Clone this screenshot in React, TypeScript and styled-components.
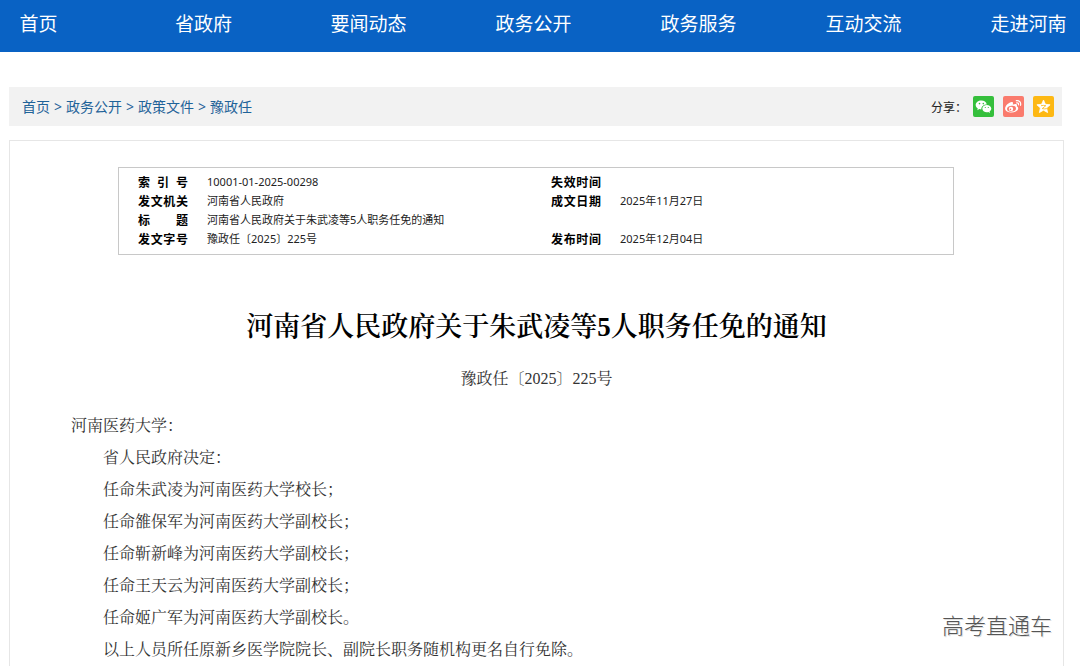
import React from 'react';
import styled, { createGlobalStyle } from 'styled-components';

const sans = '"Noto Sans", "Noto Sans CJK SC", sans-serif';
const cjkSans = '"Noto Sans CJK SC", sans-serif';
const song = '"Liberation Serif", "SimSun", "Noto Serif CJK SC", "Noto Sans CJK SC", serif';

const GlobalStyle = createGlobalStyle`
  * { box-sizing: border-box; }
  body { margin: 0; background: #fff; color: #333; font-family: ${sans}; }
`;

const Page = styled.div`
  position: relative;
  overflow: hidden;
`;

const NavBar = styled.nav`
  background: #0962c4;
  overflow: hidden;
`;

const NavList = styled.ul`
  list-style: none;
  display: grid;
  grid-template-columns: repeat(7, 1fr);
  margin: 0 -31px 0 -44px;
  padding: 0 0 6px;
`;

const NavLink = styled.a`
  display: block;
  text-align: center;
  font: 400 19px/46px ${cjkSans};
  color: #fff;
  text-decoration: none;
`;

const Container = styled.main`
  margin: 35px 16px 0 9px;
`;

const CrumbBar = styled.div`
  display: flex;
  align-items: center;
  justify-content: space-between;
  height: 39px;
  margin-right: 2px;
  padding: 0 8px 0 13px;
  background: #f2f2f2;
`;

const Crumbs = styled.div`
  display: flex;
  gap: 4px;
  font-size: 14px;
  line-height: 20px;
  color: #1f6399;
`;

const CrumbLink = styled.a`
  color: inherit;
  text-decoration: none;
`;

const Share = styled.div`
  display: flex;
  align-items: center;
  gap: 6px;
  font: 12px/20px ${cjkSans};
  color: #222;
`;

const ShareButtons = styled.div`
  display: flex;
  gap: 9px;
`;

const ShareButton = styled.button<{ $color: string }>`
  width: 21px;
  height: 21px;
  padding: 0;
  border: 0;
  border-radius: 2px;
  background: ${(p) => p.$color};
  svg { display: block; width: 21px; height: 21px; }
`;

const Panel = styled.article`
  margin-top: 14px;
  padding: 26px 61px 0;
  border: 1px solid #e6e6e6;
  border-bottom: 0;
`;

const InfoBox = styled.div`
  margin: 0 48px 0 47px;
  padding: 4px 0 6px 19px;
  border: 1px solid #c8c8c8;
`;

const InfoTable = styled.table`
  width: 100%;
  table-layout: fixed;
  border-collapse: collapse;
`;

const InfoLabel = styled.th`
  width: 50px;
  padding: 0;
  font: 700 12px/19px ${cjkSans};
  text-align: justify;
  text-align-last: justify;
  color: #000;
`;

const InfoValue = styled.td<{ $wide?: boolean }>`
  width: ${(p) => (p.$wide ? '363px' : 'auto')};
  padding: 0 0 0 19px;
  font: 11px/19px ${sans};
  color: #222;
`;

const Title = styled.h1`
  margin: 52px 0 0;
  font: 600 27px/40px ${song};
  text-align: center;
  color: #000;
`;

const DocNumber = styled.p`
  margin: 20px 0 0;
  font: 16px/24px ${song};
  text-align: center;
  color: #333;
`;

const Body = styled.div`
  margin-top: 19px;
  font: 16px/32px ${song};
  color: #333;
`;

const Paragraph = styled.p<{ $flush?: boolean }>`
  margin: 0;
  text-indent: ${(p) => (p.$flush ? '0' : '2em')};
`;

const Watermark = styled.div`
  position: absolute;
  right: 28px;
  bottom: 26px;
  font: 300 22px/32px ${cjkSans};
  color: #555;
  text-shadow: 1px 1px 0 #ddd;
`;

const navItems = ['首页', '省政府', '要闻动态', '政务公开', '政务服务', '互动交流', '走进河南'];
const crumbs = ['首页', '政务公开', '政策文件', '豫政任'];

const infoRows = [
  ['索引号', '10001-01-2025-00298', '失效时间', ''],
  ['发文机关', '河南省人民政府', '成文日期', '2025年11月27日'],
  ['标题', '河南省人民政府关于朱武凌等5人职务任免的通知', '', ''],
  ['发文字号', '豫政任〔2025〕225号', '发布时间', '2025年12月04日'],
];

const paragraphs = [
  '省人民政府决定：',
  '任命朱武凌为河南医药大学校长；',
  '任命雒保军为河南医药大学副校长；',
  '任命靳新峰为河南医药大学副校长；',
  '任命王天云为河南医药大学副校长；',
  '任命姬广军为河南医药大学副校长。',
  '以上人员所任原新乡医学院院长、副院长职务随机构更名自行免除。',
];

const WeChatIcon = () => (
  <svg viewBox="0 0 21 21" aria-hidden="true">
    <path fill="#fff" d="M8.400 4.400c-3.200 0-5.700 2-5.700 4.500 0 1.500.8 2.700 2.100 3.500l-.5 1.800 2-1.100c.7.2 1.300.3 2 .3-.1-3 2.300-5 5.500-5C13.400 6 11.100 4.400 8.400 4.400z" />
    <path fill="#fff" d="M18.300 12.600c0-2.100-2.100-3.700-4.500-3.700s-4.500 1.600-4.500 3.700 2 3.700 4.500 3.700c.5 0 1-.1 1.500-.2l1.700.9-.4-1.500c1-.7 1.700-1.700 1.700-2.900z" />
    <g fill="#35bf3c">
      <circle cx="6.500" cy="7.600" r=".8" />
      <circle cx="10.300" cy="7.600" r=".8" />
      <circle cx="12.300" cy="11.500" r=".6" />
      <circle cx="15.300" cy="11.500" r=".6" />
    </g>
  </svg>
);

const WeiboIcon = () => (
  <svg viewBox="0 0 21 21" aria-hidden="true">
    <path fill="#fff" d="M14.300 10.600c-.4-.1-.5-.2-.4-.5.3-1 .1-1.600-.4-1.900-.8-.5-2.200-.2-3.300.3-.4.2-.5 0-.4-.3.3-.9.2-1.600-.1-1.900-1-1-3.500.1-5.400 2-1.400 1.400-2.200 2.900-2.200 4.200 0 2.500 3.200 4.100 6.300 4.100 4.100 0 6.800-2.300 6.800-4.200 0-1.100-.9-1.600-.9-1.800z" />
    <ellipse cx="8.500" cy="12.700" rx="4.500" ry="2.900" fill="#fa7b6d" transform="rotate(-7 8.500 12.700)" />
    <circle cx="8" cy="12.900" r="2.200" fill="#fff" />
    <circle cx="7.400" cy="13.400" r=".8" fill="#fa7b6d" />
    <path fill="none" stroke="#fff" strokeWidth="1.200" strokeLinecap="round" d="M13.300 4.700c3-.5 5 1.700 4.200 4.600M13.700 6.900c1.300-.2 2.100.6 1.800 1.900" />
  </svg>
);

const QzoneIcon = () => (
  <svg viewBox="0 0 21 21" aria-hidden="true">
    <path fill="#fff" stroke="#fff" strokeWidth=".8" strokeLinejoin="round" d="M10.500 4l1.900 4.300 4.700.5-3.500 3.100 1 4.700-4.100-2.400-4.100 2.400 1-4.700-3.500-3.100 4.700-.5z" />
    <path fill="none" stroke="#fdb813" strokeWidth=".8" d="M8 9.700c1.700-.4 3.300-.4 4.800 0l-3.600 2.900c1.600.4 3 .4 4.600 0" />
  </svg>
);

export default function App() {
  return (
    <Page>
      <GlobalStyle />
      <NavBar>
        <NavList>
          {navItems.map((t) => (
            <li key={t}><NavLink href="#">{t}</NavLink></li>
          ))}
        </NavList>
      </NavBar>
      <Container>
        <CrumbBar>
          <Crumbs>
            {crumbs.map((t, i) => (
              <React.Fragment key={t}>
                {i > 0 && <span>&gt;</span>}
                <CrumbLink href="#">{t}</CrumbLink>
              </React.Fragment>
            ))}
          </Crumbs>
          <Share>
            <span>分享：</span>
            <ShareButtons>
              <ShareButton $color="#35bf3c" aria-label="微信"><WeChatIcon /></ShareButton>
              <ShareButton $color="#fa7b6d" aria-label="微博"><WeiboIcon /></ShareButton>
              <ShareButton $color="#fdb813" aria-label="QQ空间"><QzoneIcon /></ShareButton>
            </ShareButtons>
          </Share>
        </CrumbBar>
        <Panel>
          <InfoBox>
            <InfoTable>
              <tbody>
                {infoRows.map(([l1, v1, l2, v2]) => (
                  <tr key={l1}>
                    <InfoLabel scope="row">{l1}</InfoLabel>
                    <InfoValue $wide>{v1}</InfoValue>
                    <InfoLabel scope="row">{l2}</InfoLabel>
                    <InfoValue>{v2}</InfoValue>
                  </tr>
                ))}
              </tbody>
            </InfoTable>
          </InfoBox>
          <Title>河南省人民政府关于朱武凌等5人职务任免的通知</Title>
          <DocNumber>豫政任〔2025〕225号</DocNumber>
          <Body>
            <Paragraph $flush>河南医药大学：</Paragraph>
            {paragraphs.map((t) => (
              <Paragraph key={t}>{t}</Paragraph>
            ))}
          </Body>
        </Panel>
      </Container>
      <Watermark>高考直通车</Watermark>
    </Page>
  );
}
